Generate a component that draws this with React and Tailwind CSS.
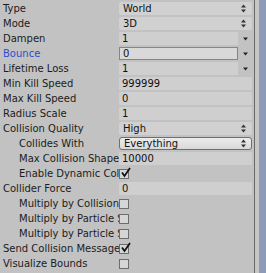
import React from "react";

const font = { fontFamily: '"DejaVu Sans", Verdana, sans-serif' };

function UpDown() {
  return (
    <svg width="5" height="9" viewBox="0 0 5 9" className="shrink-0">
      <path d="M2.5 0.5 L5 3.5 L0 3.5 Z" fill="#333" />
      <path d="M0 5.5 L5 5.5 L2.5 8.5 Z" fill="#333" />
    </svg>
  );
}

function Down() {
  return (
    <svg width="5" height="4" viewBox="0 0 5 4" className="shrink-0">
      <path d="M0 0.5 L5 0.5 L2.5 3.5 Z" fill="#222" />
    </svg>
  );
}

function Check() {
  return (
    <svg width="11" height="11" viewBox="0 0 11 11" className="absolute left-[0px] top-[-3px]">
      <path d="M2 5.5 L4.5 9 L10 1" stroke="#111" strokeWidth="1.8" fill="none" />
    </svg>
  );
}

function Label({ text, indent, color }) {
  return (
    <div
      className={`w-[119px] shrink-0 overflow-hidden whitespace-nowrap text-[10px] leading-[15px] ${indent ? "pl-[19px]" : "pl-[3px]"} ${color ? "text-[#2b4fd0]" : "text-[#1c1c1c]"}`}
    >
      {text}
    </div>
  );
}

function Popup({ value }) {
  return (
    <div className="flex h-[13px] w-[133px] items-center justify-between rounded-[2px] bg-[#d1d1d1] pl-[4px] pr-[6px] text-[10px] text-[#111]">
      <span>{value}</span>
      <UpDown />
    </div>
  );
}

function Curve({ value, focus }) {
  return (
    <div className="flex w-[133px] items-center">
      <div
        className={`flex h-[13px] w-[119px] items-center pl-[3px] text-[10px] text-[#111] ${focus ? "border border-[#7c7cd8] bg-[#d9d9d9]" : "bg-[#cfcfcf]"}`}
      >
        {value}
      </div>
      <div className="flex flex-1 justify-center pl-[1px]">
        <Down />
      </div>
    </div>
  );
}

function Num({ value }) {
  return (
    <div className="flex h-[13px] w-[133px] items-center rounded-[1px] bg-[#cfcfcf] pl-[3px] text-[10px] text-[#111]">
      {value}
    </div>
  );
}

function Mask({ value }) {
  return (
    <div className="flex h-[13px] w-[133px] items-center justify-between rounded-[3px] border border-[#6f6f6f] bg-gradient-to-b from-[#ececec] to-[#d9d9d9] pl-[4px] pr-[5px] text-[10px] text-[#111]">
      <span>{value}</span>
      <UpDown />
    </div>
  );
}

function Box({ checked }) {
  return (
    <div className="relative h-[10px] w-[10px] border border-[#6d6d6d] bg-[#d6d6d6]">
      {checked && <Check />}
    </div>
  );
}

function Row({ label, indent, color, children }) {
  return (
    <div className="flex h-[15px] items-center">
      <Label text={label} indent={indent} color={color} />
      <div className="flex items-center">{children}</div>
    </div>
  );
}

export default function App() {
  return (
    <div className="flex h-[273px] w-[266px] overflow-hidden bg-[#c2c2c2]" style={font}>
      <div className="flex w-[254px] flex-col pt-[1px]">
        <Row label="Type"><Popup value="World" /></Row>
        <Row label="Mode"><Popup value="3D" /></Row>
        <Row label="Dampen"><Curve value="1" /></Row>
        <Row label="Bounce" color><Curve value="0" focus /></Row>
        <Row label="Lifetime Loss"><Curve value="1" /></Row>
        <Row label="Min Kill Speed"><Num value="999999" /></Row>
        <Row label="Max Kill Speed"><Num value="0" /></Row>
        <Row label="Radius Scale"><Num value="1" /></Row>
        <Row label="Collision Quality"><Popup value="High" /></Row>
        <Row label="Collides With" indent><Mask value="Everything" /></Row>
        <Row label="Max Collision Shape" indent><Num value="10000" /></Row>
        <Row label="Enable Dynamic Colliders" indent><Box checked /></Row>
        <Row label="Collider Force"><Num value="0" /></Row>
        <Row label="Multiply by Collision Angle" indent><Box /></Row>
        <Row label="Multiply by Particle Speed" indent><Box /></Row>
        <Row label="Multiply by Particle Size" indent><Box /></Row>
        <Row label="Send Collision Messages"><Box checked /></Row>
        <Row label="Visualize Bounds"><Box /></Row>
      </div>
      <div className="w-[1px] bg-[#6a6a6a]" />
      <div className="w-[4px] bg-[#c6c6c6]" />
      <div className="flex-1 bg-[#8d9bb6]" />
    </div>
  );
}
